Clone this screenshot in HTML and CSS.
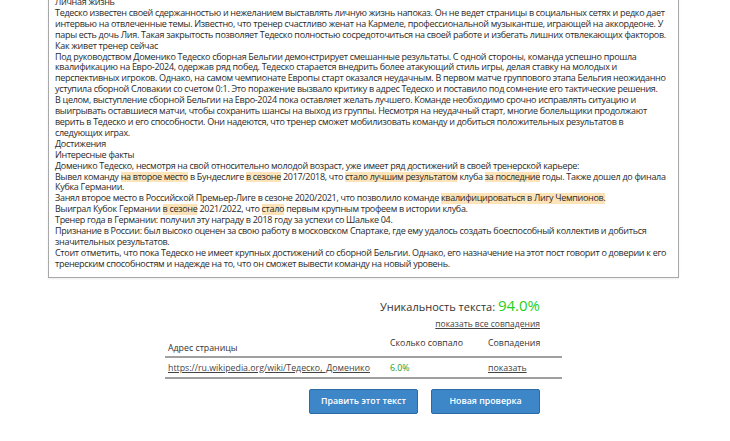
FILE: index.html
```html
<!DOCTYPE html>
<html lang="ru">
<head>
  <meta charset="UTF-8">
  <meta name="viewport" content="width=device-width, initial-scale=1.0">
  <title>Проверка уникальности текста</title>
  <link rel="stylesheet" href="styles.css">
</head>
<body>

  <div class="text-box">
    Личная жизнь<br>
    Тедеско известен своей сдержанностью и нежеланием выставлять личную жизнь напоказ. Он не ведет страницы в социальных сетях и редко дает интервью на отвлеченные темы. Известно, что тренер счастливо женат на Кармеле, профессиональной музыкантше, играющей на аккордеоне. У пары есть дочь Лия. Такая закрытость позволяет Тедеско полностью сосредоточиться на своей работе и избегать лишних отвлекающих факторов.<br>
    Как живет тренер сейчас<br>
    Под руководством Доменико Тедеско сборная Бельгии демонстрирует смешанные результаты. С одной стороны, команда успешно прошла квалификацию на Евро-2024, одержав ряд побед. Тедеско старается внедрить более атакующий стиль игры, делая ставку на молодых и перспективных игроков. Однако, на самом чемпионате Европы старт оказался неудачным. В первом матче группового этапа Бельгия неожиданно уступила сборной Словакии со счетом 0:1. Это поражение вызвало критику в адрес Тедеско и поставило под сомнение его тактические решения.<br>
    В целом, выступление сборной Бельгии на Евро-2024 пока оставляет желать лучшего. Команде необходимо срочно исправлять ситуацию и выигрывать оставшиеся матчи, чтобы сохранить шансы на выход из группы. Несмотря на неудачный старт, многие болельщики продолжают верить в Тедеско и его способности. Они надеются, что тренер сможет мобилизовать команду и добиться положительных результатов в следующих играх.<br>
    Достижения<br>
    Интересные факты<br>
    Доменико Тедеско, несмотря на свой относительно молодой возраст, уже имеет ряд достижений в своей тренерской карьере:<br>
    Вывел команду <span class="hl">на второе место</span> в Бундеслиге <span class="hl">в сезоне</span> 2017/2018, что <span class="hl">стало лучшим результатом</span> клуба <span class="hl">за последние</span> годы. Также дошел до финала Кубка Германии.<br>
    Занял второе место в Российской Премьер-Лиге в сезоне 2020/2021, что позволило команде <span class="hl">квалифицироваться в Лигу Чемпионов.</span><br>
    Выиграл Кубок Германии <span class="hl">в сезоне</span> 2021/2022, что <span class="hl">стало</span> первым крупным трофеем в истории клуба.<br>
    Тренер года в Германии: получил эту награду в 2018 году за успехи со Шальке 04.<br>
    Признание в России: был высоко оценен за свою работу в московском Спартаке, где ему удалось создать боеспособный коллектив и добиться значительных результатов.<br>
    Стоит отметить, что пока Тедеско не имеет крупных достижений со сборной Бельгии. Однако, его назначение на этот пост говорит о доверии к его тренерским способностям и надежде на то, что он сможет вывести команду на новый уровень.
  </div>

  <div class="result">
    <div class="uniq">
      Уникальность текста: <span class="uniq-value">94.0%</span>
      <div class="show-all-row"><a href="#" class="show-all">показать все совпадения</a></div>
    </div>

    <table class="matches">
      <tr>
        <th class="col-url">Адрес страницы</th>
        <th class="col-count">Сколько совпало</th>
        <th class="col-show">Совпадения</th>
      </tr>
      <tr>
        <td><a href="#">https://ru.wikipedia.org/wiki/Тедеско,_Доменико</a></td>
        <td class="percent">6.0%</td>
        <td><a href="#">показать</a></td>
      </tr>
    </table>

    <div class="buttons">
      <button class="btn">Править этот текст</button>
      <button class="btn">Новая проверка</button>
    </div>
  </div>

</body>
</html>
```

FILE: styles.css
```css
body {
  margin: 0;
  background-color: #fff;
  color: #333;
  font-family: 'Open Sans', 'Liberation Sans', sans-serif;
}

.text-box {
  width: 617px;
  margin: -4px 0 0 48px;
  padding: 0 6px 7px;
  border: 1px solid #a8a8a8;
  box-shadow: 0 1px 2px rgba(0, 0, 0, 0.08);
  font-size: 9px;
  letter-spacing: -0.3px;
  line-height: 10.9px;
  color: #2a2a2a;
}

.hl {
  display: inline-block;
  background-color: #fde3b8;
}

.result {
  width: 397px;
  margin: 18px 0 0 165px;
}

.uniq {
  text-align: right;
  padding-right: 22px;
  font-size: 11px;
  line-height: 18px;
}

.uniq-value {
  font-size: 15px;
  color: #22d022;
}

.show-all-row {
  margin-top: 1px;
  line-height: 12px;
}

.show-all {
  font-size: 8.5px;
}

a {
  color: #444;
}

.matches {
  width: 100%;
  border-collapse: collapse;
  margin-top: 4px;
  font-size: 8.8px;
  line-height: 12px;
}

.matches th {
  font-weight: normal;
  text-align: left;
  vertical-align: top;
  padding: 3px 3px 7px;
  border-bottom: 2px solid #a0a0a0;
}

.matches th.col-url {
  padding: 8px 3px 2px;
}

.matches th.col-count {
  width: 92px;
}

.matches th.col-show {
  width: 71px;
}

.matches td {
  padding: 4px 3px 3px;
  border-bottom: 2px solid #a0a0a0;
}

.percent {
  color: #1e9a2a;
}

.buttons {
  display: flex;
  justify-content: flex-end;
  gap: 13px;
  padding-right: 22px;
  margin-top: 10px;
}

.btn {
  width: 109px;
  height: 25px;
  background-color: #3d86c8;
  border: 1px solid #2b6aa5;
  border-radius: 2px;
  color: #fff;
  font-family: 'Open Sans', 'Liberation Sans', sans-serif;
  font-size: 8.8px;
  font-weight: 600;
  cursor: pointer;
}
```
